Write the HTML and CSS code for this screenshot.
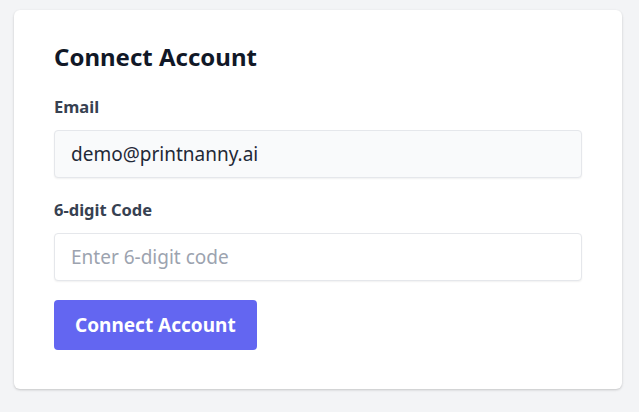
FILE: index.html
```html
<!DOCTYPE html>
<html lang="en">
<head>
<meta charset="utf-8">
<title>Connect Account</title>
<link rel="stylesheet" href="styles.css">
</head>
<body>
<div class="page">
  <form class="card">
    <h1 class="title">Connect Account</h1>
    <label class="label" for="email">Email</label>
    <input class="input input-readonly" id="email" type="email" value="demo@printnanny.ai" readonly>
    <label class="label" for="code">6-digit Code</label>
    <input class="input input-last" id="code" type="text" placeholder="Enter 6-digit code">
    <div class="actions">
      <button class="button" type="button">Connect Account</button>
    </div>
  </form>
</div>
</body>
</html>
```
FILE: styles.css
```css
* { box-sizing: border-box; }
html, body { margin: 0; padding: 0; }
body {
  background: #f3f4f6;
  font-family: "Noto Sans", "Open Sans", sans-serif;
  width: 639px;
  height: 412px;
  overflow: hidden;
}
.page {
  padding: 10px 17px 0 14px;
}
.card {
  display: flex;
  flex-direction: column;
  background: #ffffff;
  border-radius: 6px;
  box-shadow: 0 1px 3px rgba(0,0,0,0.12), 0 1px 2px rgba(0,0,0,0.08);
  padding: 31px 40px 39px 40px;
}
.title {
  margin: 0 0 22px 0;
  font-size: 24px;
  line-height: 32px;
  font-weight: 700;
  color: #111827;
}
.label {
  font-size: 16.5px;
  line-height: 24px;
  font-weight: 700;
  color: #374151;
  margin-bottom: 11px;
}
.input {
  height: 48px;
  width: 100%;
  border: 1px solid #e5e7eb;
  border-radius: 4px;
  box-shadow: 0 1px 2px rgba(0,0,0,0.06);
  padding: 0 16px;
  font-family: inherit;
  font-size: 19px;
  color: #1f2937;
  background: #ffffff;
  margin: 0 0 20px 0;
  outline: none;
}
.input-last { margin-bottom: 19px; }
.input-readonly { background: #f9fafb; }
.input::placeholder { color: #9ca3af; }
.actions { display: flex; }
.button {
  height: 50px;
  padding: 0 21px;
  border: none;
  border-radius: 4px;
  background: #6366f1;
  color: #ffffff;
  font-family: inherit;
  font-size: 19px;
  font-weight: 700;
  cursor: pointer;
}
```
